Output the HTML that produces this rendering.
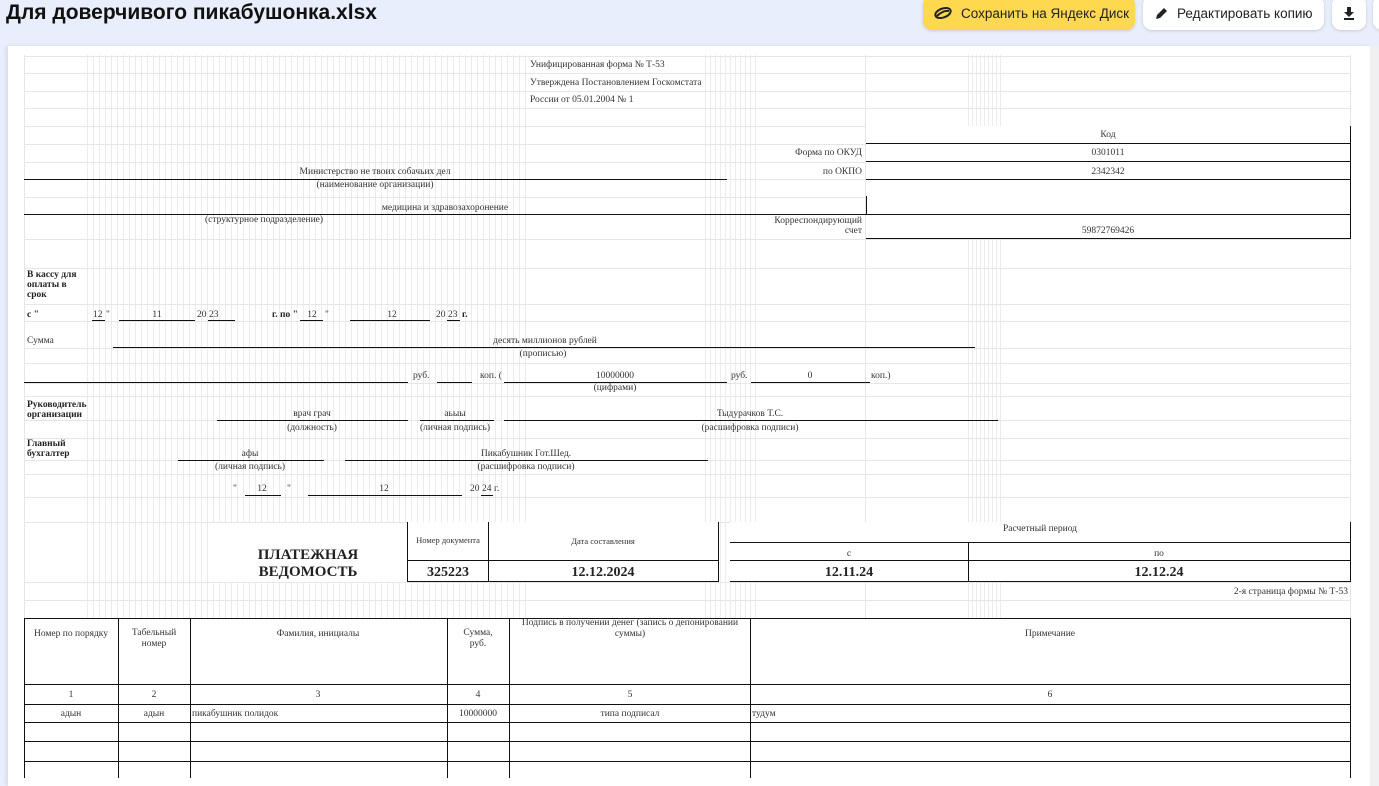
<!DOCTYPE html>
<html><head><meta charset="utf-8"><style>
*{margin:0;padding:0;box-sizing:border-box}
body{width:1379px;height:775px;overflow:hidden;background:#e8eefb;position:relative;font-family:"Liberation Serif",serif}
.title{position:absolute;left:6px;top:1px;font:bold 21px "Liberation Sans",sans-serif;color:#111;white-space:nowrap}
.btn{position:absolute;top:-4px;height:34px;border-radius:9px;font:13.5px "Liberation Sans",sans-serif;color:#222;display:flex;align-items:center;box-shadow:0 1px 3px rgba(0,0,0,.15);white-space:nowrap}
.page{position:absolute;left:8px;top:46px;width:1362px;height:740px;background:#fff;box-shadow:-2px 0 4px rgba(0,0,0,.08)}
.gray{position:absolute;left:1370px;top:46px;width:9px;height:740px;background:#f0f0f2}
.g{position:absolute;background:#e6e6e6}
.t{position:absolute;font-size:9.5px;line-height:12px;color:#333;white-space:nowrap}
.c{transform:translateX(-50%)}
.b{font-weight:bold;color:#222}
.h{position:absolute;height:1px;background:#111}
.v{position:absolute;width:1px;background:#111}
.big{font-size:14px;font-weight:bold;color:#222;line-height:16px}
.band{position:absolute;top:55px;height:563px}
</style></head><body>
<div class="title">Для доверчивого пикабушонка.xlsx</div>
<div class="btn" style="left:923px;width:212px;background:#fed94f;padding-left:10px">
<svg width="20" height="14" viewBox="0 0 20 14"><ellipse cx="10" cy="7" rx="8" ry="4.5" transform="rotate(-20 10 7)" fill="none" stroke="#222" stroke-width="2"/><path d="M4 10 Q10 4 16 5" fill="none" stroke="#222" stroke-width="2"/></svg>
<span style="margin-left:8px">Сохранить на Яндекс Диск</span></div>
<div class="btn" style="left:1143px;width:181px;background:#fff;padding-left:12px">
<svg width="14" height="14" viewBox="0 0 14 14"><path d="M1 13 L2 9 L9 2 L12 5 L5 12 Z" fill="#222"/></svg>
<span style="margin-left:8px">Редактировать копию</span></div>
<div class="btn" style="left:1332px;width:34px;background:#fff;justify-content:center">
<svg width="12" height="14" viewBox="0 0 12 14"><path d="M4 1h4v5h3L6 11 1 6h3z" fill="#222"/><rect x="1" y="12" width="10" height="2" fill="#222"/></svg></div>
<div class="btn" style="left:1373px;width:20px;background:#fff"></div>
<div class="page"></div><div class="gray"></div>

<div class="band" style="left:87px;width:440px;background:repeating-linear-gradient(90deg,#ececec 0 1px,transparent 1px 6px)"></div>
<div class="band" style="left:705px;width:55px;background:repeating-linear-gradient(90deg,#ececec 0 1px,transparent 1px 5px)"></div>
<div class="band" style="left:968px;width:33px;background:repeating-linear-gradient(90deg,#ececec 0 1px,transparent 1px 4px)"></div>
<div class="g" style="left:865px;top:55px;width:1px;height:563px"></div>
<div class="g" style="left:24px;top:55px;width:1px;height:563px"></div>
<div class="g" style="left:1350px;top:55px;width:1px;height:563px"></div>
<script>
[56,73,91,108,126,144,162,179,197,214,239,268,304,321,348,363,383,396,420,438,460,474,497,522,582,600,618].forEach(function(y){var d=document.createElement('div');d.className='g';d.style.cssText='left:24px;width:1327px;height:1px;top:'+y+'px';document.body.appendChild(d);});
</script>
<div style="position:absolute;left:210px;top:523px;width:197px;height:59px;background:#fff"></div>
<div style="position:absolute;left:407px;top:522px;width:311px;height:60px;background:#fff"></div>
<div style="position:absolute;left:730px;top:522px;width:620px;height:60px;background:#fff"></div>
<div style="position:absolute;left:24px;top:618px;width:1327px;height:160px;background:#fff"></div>
<div style="position:absolute;left:866px;top:126px;width:484px;height:112px;background:#fff"></div>

<div class="t" style="left:530px;top:59px">Унифицированная форма № Т-53</div>
<div class="t" style="left:530px;top:77px">Утверждена Постановлением Госкомстата</div>
<div class="t" style="left:530px;top:94px">России от 05.01.2004 № 1</div>

<div class="v" style="left:1350px;top:126px;height:112px"></div>
<div class="v" style="left:866px;top:196px;height:18px"></div>
<div class="h" style="left:866px;top:143px;width:485px"></div>
<div class="h" style="left:866px;top:161px;width:485px"></div>
<div class="h" style="left:866px;top:179px;width:485px"></div>
<div class="h" style="left:866px;top:214px;width:485px"></div>
<div class="h" style="left:866px;top:238px;width:485px"></div>
<div class="t c" style="left:1108px;top:129px">Код</div>
<div class="t" style="right:517px;top:147px">Форма по ОКУД</div>
<div class="t c" style="left:1108px;top:147px">0301011</div>
<div class="t" style="right:517px;top:166px">по ОКПО</div>
<div class="t c" style="left:1108px;top:166px">2342342</div>
<div class="t" style="right:517px;top:215px">Корреспондирующий</div>
<div class="t" style="right:517px;top:225px">счет</div>
<div class="t c" style="left:1108px;top:225px">59872769426</div>

<div class="t c" style="left:375px;top:166px">Министерство не твоих собачьих дел</div>
<div class="h" style="left:24px;top:179px;width:703px"></div>
<div class="t c" style="left:375px;top:179px">(наименование организации)</div>
<div class="t c" style="left:445px;top:202px">медицина и здравозахоронение</div>
<div class="h" style="left:24px;top:214px;width:842px"></div>
<div class="t c" style="left:264px;top:214px">(структурное подразделение)</div>

<div class="t b" style="left:27px;top:270px;line-height:10px">В кассу для<br>оплаты в<br>срок</div>
<div class="t b" style="left:27px;top:309px">с "</div>
<div class="t" style="left:93px;top:309px">12</div><div class="h" style="left:92px;top:320px;width:13px"></div>
<div class="t" style="left:106px;top:309px">"</div>
<div class="t c" style="left:157px;top:309px">11</div><div class="h" style="left:119px;top:320px;width:76px"></div>
<div class="t" style="left:197px;top:309px">20</div>
<div class="t" style="left:209px;top:309px">23</div><div class="h" style="left:208px;top:320px;width:27px"></div>
<div class="t b" style="left:272px;top:309px">г. по "</div>
<div class="t c" style="left:312px;top:309px">12</div><div class="h" style="left:300px;top:320px;width:23px"></div>
<div class="t" style="left:325px;top:309px">"</div>
<div class="t c" style="left:392px;top:309px">12</div><div class="h" style="left:350px;top:320px;width:80px"></div>
<div class="t" style="left:436px;top:309px">20</div>
<div class="t" style="left:448px;top:309px">23</div><div class="h" style="left:447px;top:320px;width:13px"></div>
<div class="t b" style="left:462px;top:309px">г.</div>

<div class="t" style="left:27px;top:335px">Сумма</div>
<div class="t c" style="left:545px;top:335px">десять миллионов рублей</div>
<div class="h" style="left:113px;top:347px;width:862px"></div>
<div class="t c" style="left:543px;top:348px">(прописью)</div>
<div class="h" style="left:24px;top:382px;width:384px"></div>
<div class="t" style="left:413px;top:370px">руб.</div>
<div class="h" style="left:437px;top:382px;width:35px"></div>
<div class="t" style="left:480px;top:370px">коп. (</div>
<div class="t c" style="left:615px;top:370px">10000000</div><div class="h" style="left:504px;top:382px;width:223px"></div>
<div class="t" style="left:731px;top:370px">руб.</div>
<div class="t c" style="left:810px;top:370px">0</div><div class="h" style="left:751px;top:382px;width:119px"></div>
<div class="t" style="left:871px;top:370px">коп.)</div>
<div class="t c" style="left:615px;top:382px">(цифрами)</div>

<div class="t b" style="left:27px;top:400px;line-height:10px">Руководитель<br>организации</div>
<div class="t c" style="left:312px;top:408px">врач грач</div><div class="h" style="left:217px;top:420px;width:191px"></div>
<div class="t c" style="left:455px;top:408px">аьыы</div><div class="h" style="left:420px;top:420px;width:74px"></div>
<div class="t c" style="left:750px;top:408px">Тыдурачков Т.С.</div><div class="h" style="left:504px;top:420px;width:494px"></div>
<div class="t c" style="left:312px;top:422px">(должность)</div>
<div class="t c" style="left:455px;top:422px">(личная подпись)</div>
<div class="t c" style="left:750px;top:422px">(расшифровка подписи)</div>

<div class="t b" style="left:27px;top:439px;line-height:10px">Главный<br>бухгалтер</div>
<div class="t c" style="left:250px;top:448px">афы</div><div class="h" style="left:178px;top:460px;width:146px"></div>
<div class="t c" style="left:526px;top:448px">Пикабушник Гот.Шед.</div><div class="h" style="left:345px;top:460px;width:363px"></div>
<div class="t c" style="left:250px;top:461px">(личная подпись)</div>
<div class="t c" style="left:526px;top:461px">(расшифровка подписи)</div>

<div class="t" style="left:233px;top:483px">"</div>
<div class="t c" style="left:262px;top:483px">12</div><div class="h" style="left:245px;top:495px;width:36px"></div>
<div class="t" style="left:287px;top:483px">"</div>
<div class="t c" style="left:384px;top:483px">12</div><div class="h" style="left:308px;top:495px;width:154px"></div>
<div class="t" style="left:470px;top:483px">20</div>
<div class="t" style="left:482px;top:483px">24</div><div class="h" style="left:481px;top:495px;width:12px"></div>
<div class="t" style="left:494px;top:483px">г.</div>

<div class="t c big" style="left:308px;top:547px;font-size:15px">ПЛАТЕЖНАЯ</div>
<div class="t c big" style="left:308px;top:564px;font-size:15px">ВЕДОМОСТЬ</div>
<div class="v" style="left:407px;top:522px;height:60px"></div>
<div class="v" style="left:488px;top:522px;height:60px"></div>
<div class="v" style="left:718px;top:522px;height:60px"></div>
<div class="h" style="left:407px;top:560px;width:312px"></div>
<div class="h" style="left:407px;top:581px;width:312px"></div>
<div class="t c" style="left:448px;top:534px;font-size:8.5px">Номер документа</div>
<div class="t c" style="left:603px;top:535px;font-size:8.5px">Дата составления</div>
<div class="t c big" style="left:448px;top:565px">325223</div>
<div class="t c big" style="left:603px;top:565px">12.12.2024</div>

<div class="t c" style="left:1040px;top:523px">Расчетный период</div>
<div class="h" style="left:730px;top:542px;width:621px"></div>
<div class="v" style="left:1350px;top:522px;height:60px"></div>
<div class="v" style="left:968px;top:542px;height:40px"></div>
<div class="h" style="left:730px;top:560px;width:621px"></div>
<div class="h" style="left:730px;top:581px;width:621px"></div>
<div class="t c" style="left:849px;top:548px">с</div>
<div class="t c" style="left:1159px;top:548px">по</div>
<div class="t c big" style="left:849px;top:565px">12.11.24</div>
<div class="t c big" style="left:1159px;top:565px">12.12.24</div>
<div class="t" style="right:31px;top:586px">2-я страница формы № Т-53</div>

<div class="h" style="left:24px;top:684px;width:1327px"></div>
<div class="h" style="left:24px;top:704px;width:1327px"></div>
<div class="h" style="left:24px;top:722px;width:1327px"></div>
<div class="h" style="left:24px;top:741px;width:1327px"></div>
<div class="h" style="left:24px;top:761px;width:1327px"></div>
<div class="v" style="left:24px;top:618px;height:160px"></div>
<div class="v" style="left:118px;top:618px;height:160px"></div>
<div class="v" style="left:190px;top:618px;height:160px"></div>
<div class="v" style="left:447px;top:618px;height:160px"></div>
<div class="v" style="left:509px;top:618px;height:160px"></div>
<div class="v" style="left:750px;top:618px;height:160px"></div>
<div class="v" style="left:1350px;top:618px;height:160px"></div>
<div class="h" style="left:24px;top:618px;width:1327px"></div>
<div class="t c" style="left:71px;top:628px">Номер по порядку</div>
<div class="t c" style="left:154px;top:628px;text-align:center;line-height:11px">Табельный<br>номер</div>
<div class="t c" style="left:318px;top:628px">Фамилия, инициалы</div>
<div class="t c" style="left:478px;top:628px;text-align:center;line-height:11px">Сумма,<br>руб.</div>
<div class="t c" style="left:630px;top:618px;text-align:center;line-height:11px">Подпись в получении денег (запись о депонировании<br>суммы)</div>
<div class="t c" style="left:1050px;top:628px">Примечание</div>
<div class="t c" style="left:71px;top:689px">1</div>
<div class="t c" style="left:154px;top:689px">2</div>
<div class="t c" style="left:318px;top:689px">3</div>
<div class="t c" style="left:478px;top:689px">4</div>
<div class="t c" style="left:630px;top:689px">5</div>
<div class="t c" style="left:1050px;top:689px">6</div>
<div class="t c" style="left:71px;top:708px">адын</div>
<div class="t c" style="left:154px;top:708px">адын</div>
<div class="t" style="left:192px;top:708px">пикабушник полидок</div>
<div class="t c" style="left:478px;top:708px">10000000</div>
<div class="t c" style="left:630px;top:708px">типа подписал</div>
<div class="t" style="left:752px;top:708px">тудум</div>
</body></html>
